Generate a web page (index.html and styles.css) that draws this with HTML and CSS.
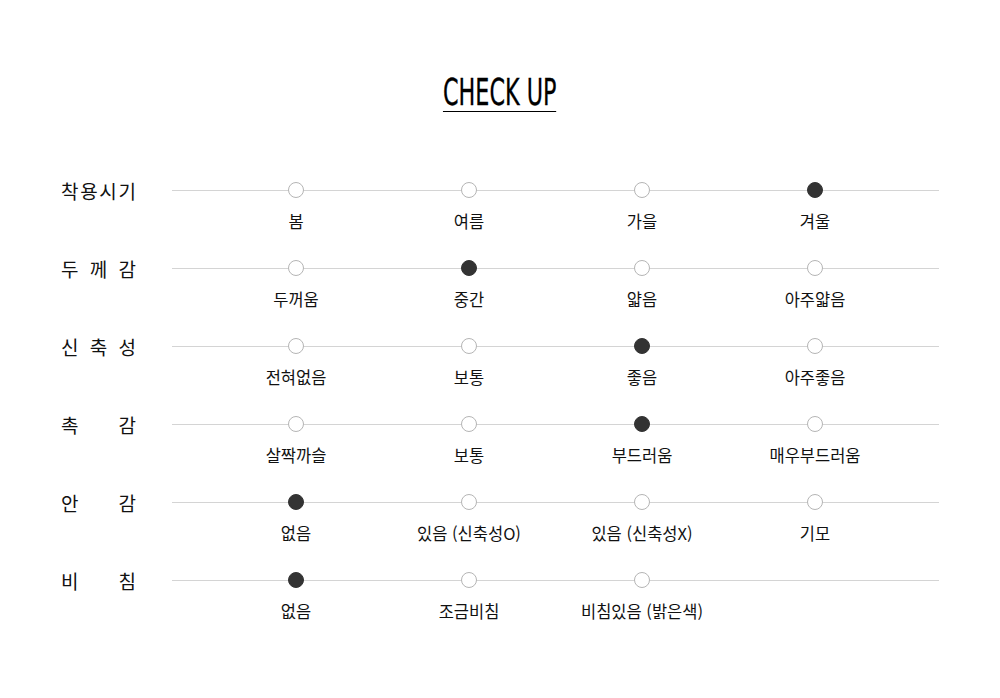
FILE: index.html
```html
<!DOCTYPE html>
<html lang="ko">
<head>
<meta charset="utf-8">
<title>CHECK UP</title>
<link rel="stylesheet" href="styles.css">
</head>
<body>
<div class="checkup">
  <div class="title-wrap"><h2 class="title">CHECK UP</h2></div>
  <div class="rows">
    <div class="row">
      <div class="label"><span>착</span><span>용</span><span>시</span><span>기</span></div>
      <div class="track">
        <div class="opt"><i class="dot"></i><span class="txt">봄</span></div>
        <div class="opt"><i class="dot"></i><span class="txt">여름</span></div>
        <div class="opt"><i class="dot"></i><span class="txt">가을</span></div>
        <div class="opt"><i class="dot on"></i><span class="txt">겨울</span></div>
      </div>
    </div>
    <div class="row">
      <div class="label"><span>두</span><span>께</span><span>감</span></div>
      <div class="track">
        <div class="opt"><i class="dot"></i><span class="txt">두꺼움</span></div>
        <div class="opt"><i class="dot on"></i><span class="txt">중간</span></div>
        <div class="opt"><i class="dot"></i><span class="txt">얇음</span></div>
        <div class="opt"><i class="dot"></i><span class="txt">아주얇음</span></div>
      </div>
    </div>
    <div class="row">
      <div class="label"><span>신</span><span>축</span><span>성</span></div>
      <div class="track">
        <div class="opt"><i class="dot"></i><span class="txt">전혀없음</span></div>
        <div class="opt"><i class="dot"></i><span class="txt">보통</span></div>
        <div class="opt"><i class="dot on"></i><span class="txt">좋음</span></div>
        <div class="opt"><i class="dot"></i><span class="txt">아주좋음</span></div>
      </div>
    </div>
    <div class="row">
      <div class="label"><span>촉</span><span>감</span></div>
      <div class="track">
        <div class="opt"><i class="dot"></i><span class="txt">살짝까슬</span></div>
        <div class="opt"><i class="dot"></i><span class="txt">보통</span></div>
        <div class="opt"><i class="dot on"></i><span class="txt">부드러움</span></div>
        <div class="opt"><i class="dot"></i><span class="txt">매우부드러움</span></div>
      </div>
    </div>
    <div class="row">
      <div class="label"><span>안</span><span>감</span></div>
      <div class="track">
        <div class="opt"><i class="dot on"></i><span class="txt">없음</span></div>
        <div class="opt"><i class="dot"></i><span class="txt">있음 (신축성O)</span></div>
        <div class="opt"><i class="dot"></i><span class="txt">있음 (신축성X)</span></div>
        <div class="opt"><i class="dot"></i><span class="txt">기모</span></div>
      </div>
    </div>
    <div class="row">
      <div class="label"><span>비</span><span>침</span></div>
      <div class="track">
        <div class="opt"><i class="dot on"></i><span class="txt">없음</span></div>
        <div class="opt"><i class="dot"></i><span class="txt">조금비침</span></div>
        <div class="opt"><i class="dot"></i><span class="txt">비침있음 (밝은색)</span></div>
        <div class="opt"></div>
      </div>
    </div>
  </div>
</div>
</body>
</html>
```

FILE: styles.css
```css
* { box-sizing: border-box; }
html, body { margin: 0; padding: 0; background: #fff; }
body {
  font-family: "Noto Sans CJK KR", "Noto Sans", sans-serif;
  color: #111;
}
.checkup { width: 1000px; }
.title-wrap {
  display: flex;
  justify-content: center;
  padding-top: 75px;
}
.title {
  margin: 0;
  display: inline-block;
  font-family: "Liberation Sans Narrow", "DejaVu Sans Condensed", "Liberation Sans", sans-serif;
  font-weight: 400;
  font-size: 37px;
  line-height: 36px;
  color: #000;
  border-bottom: 1px solid #000;
  transform: scaleX(0.67);
  -webkit-text-stroke: 0.3px #000;
}
.rows {
  padding-top: 70px;
  padding-left: 61px;
}
.row {
  display: grid;
  grid-template-columns: 75px 767px;
  column-gap: 36px;
  align-items: start;
  margin-bottom: 27px;
}
.label {
  display: flex;
  justify-content: space-between;
  align-items: center;
  height: 16px;
  font-size: 19px;
  color: #111;
}
.track {
  display: grid;
  grid-template-columns: repeat(4, 173px);
  padding: 0 37.5px;
  background: linear-gradient(#d4d4d4, #d4d4d4) no-repeat 0 7.5px / 100% 1px;
}
.opt {
  display: flex;
  flex-direction: column;
  align-items: center;
}
.dot {
  display: block;
  width: 16px;
  height: 16px;
  border-radius: 50%;
  border: 1px solid #b5b5b5;
  background: #fff;
}
.dot.on {
  border-color: #333;
  background: #333;
}
.txt {
  margin-top: 11px;
  font-size: 16.5px;
  line-height: 24px;
  color: #111;
  white-space: nowrap;
}
```
